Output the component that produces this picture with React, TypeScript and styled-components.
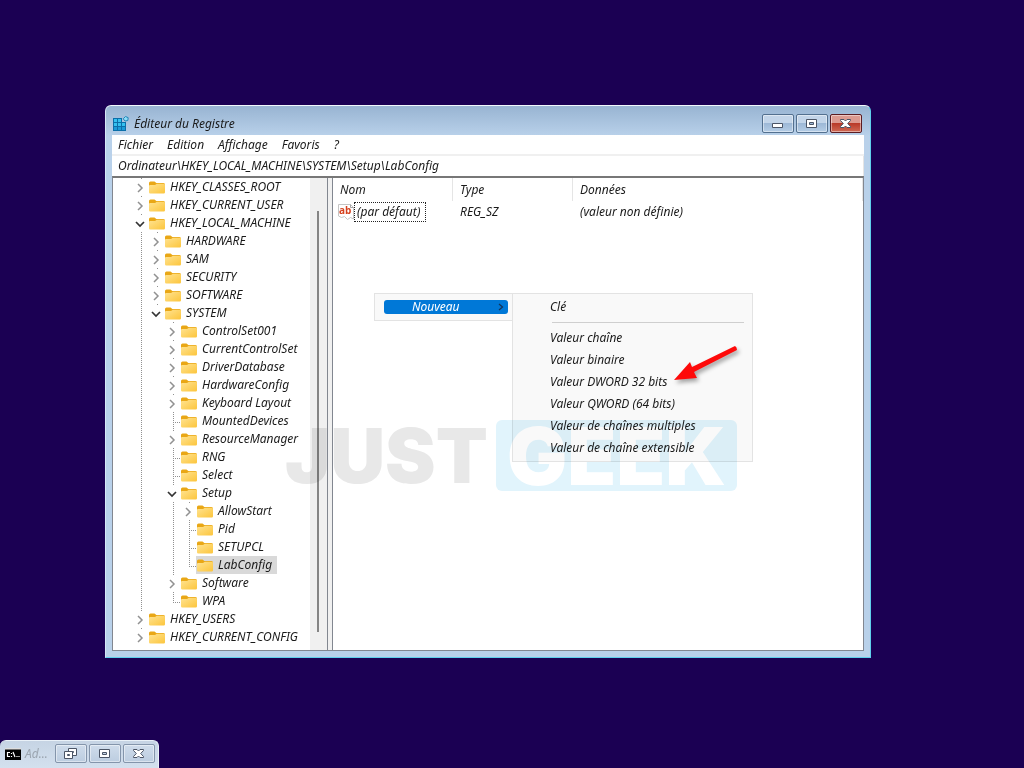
import React from "react";
import styled, { createGlobalStyle, css } from "styled-components";

const GlobalStyle = createGlobalStyle`
  *, *::before, *::after { box-sizing: border-box; }
  body {
    margin: 0;
    background: #1b0053;
    color: #1a1a1a;
    font: italic 12px/18px "Noto Sans", "Open Sans", sans-serif;
    overflow: hidden;
  }
  button, input { font: inherit; color: inherit; }
`;

const Desktop = styled.main`
  position: relative;
  min-height: 100vh;
`;

const Window = styled.section`
  position: absolute;
  top: 105px;
  left: 105px;
  right: 153px;
  padding: 0 6px 6px;
  border: 1px solid #5fd0ec;
  border-top-color: #f2f8fd;
  border-left-color: #d5e6f6;
  border-radius: 6px 6px 0 0;
  background: linear-gradient(#98b4d2, #b9d1ea 30px, #b9d1ea);
`;

const TitleBar = styled.header`
  display: flex;
  align-items: center;
  gap: 5px;
  height: 29px;
  padding: 6px 2px 0 1px;
`;

const Title = styled.h1`
  flex: 1;
  margin: 0;
  font: inherit;
`;

const ButtonGroup = styled.div`
  display: flex;
  gap: 2px;
`;

const frameTones = {
  active: css`
    border-color: #53708f;
    background: linear-gradient(#c3d5e9 45%, #9db8d6 50%, #b5cde6);
  `,
  close: css`
    border-color: #5b1c22;
    background: linear-gradient(#dc9a90 45%, #b93a29 50%, #cf6a55);
  `,
  inactive: css`
    border-color: #8495ab;
    background: linear-gradient(#cfdceb, #bccde0);
  `,
};

const FrameButton = styled.button<{ $tone: keyof typeof frameTones }>`
  display: grid;
  place-items: center;
  width: 32px;
  height: 19px;
  padding: 0;
  border: 1px solid;
  border-radius: 2px;
  box-shadow: inset 0 0 0 1px rgba(255, 255, 255, 0.45);
  ${(p) => frameTones[p.$tone]}
`;

const MenuBar = styled.nav`
  display: flex;
  gap: 14px;
  height: 21px;
  padding: 1px 6px;
  border-bottom: 2px solid #f0f0f0;
  background: #fff;
`;

const MenuBarButton = styled.button`
  padding: 0;
  border: 0;
  background: none;
`;

const AddressInput = styled.input`
  display: block;
  width: 100%;
  height: 20px;
  padding: 0 6px 2px;
  border: 0;
  border-right: 1px solid #e5e5e5;
  background: #fff;
  outline: none;
`;

const Panes = styled.div`
  display: flex;
  border: 1px solid #828790;
  border-top: 2px solid #777;
  background: #fff;
`;

const TreePane = styled.div`
  display: flex;
  flex: none;
  width: 215px;
  border-right: 1px solid #828790;
`;

const Tree = styled.ul`
  flex: 1;
  margin: 0;
  padding: 0 0 4px 19px;
  list-style: none;
`;

const TreeRow = styled.li`
  display: flex;
  height: 18px;
`;

const line = "repeating-linear-gradient(to bottom, #909090 0 1px, transparent 1px 2px)";
const dash = "repeating-linear-gradient(to right, #909090 0 1px, transparent 1px 2px)";

const guides = {
  none: css``,
  through: css`background: ${line} 9px 0 / 1px 18px no-repeat;`,
  tee: css`background: ${line} 9px 0 / 1px 18px no-repeat, ${dash} 9px 10px / 7px 1px no-repeat;`,
  corner: css`background: ${line} 9px 0 / 1px 11px no-repeat, ${dash} 9px 10px / 7px 1px no-repeat;`,
  tick: css`background: ${line} 9px 0 / 1px 2px no-repeat;`,
};

const Guide = styled.span<{ $kind: keyof typeof guides }>`
  flex: none;
  width: 16px;
  ${(p) => guides[p.$kind]}
`;

const Toggle = styled.button`
  display: grid;
  place-items: center;
  width: 16px;
  height: 18px;
  padding: 2px 0 0;
  border: 0;
  background: none;
`;

const TreeLabel = styled.span<{ $selected?: boolean }>`
  display: flex;
  align-items: center;
  gap: 5px;
  padding: 0 5px 0 1px;
  white-space: nowrap;
  background: ${(p) => (p.$selected ? "#d9d9d9" : "none")};
`;

const ScrollTrack = styled.div`
  display: flex;
  justify-content: center;
  width: 17px;
  padding: 33px 1px 18px 0;
  background: #f0f0f0;
`;

const ScrollThumb = styled.div`
  width: 2px;
  background: #858585;
`;

const Splitter = styled.div`
  flex: none;
  width: 5px;
  border-right: 1px solid #828790;
  background: #f0f0f0;
`;

const ValuesPane = styled.div`
  position: relative;
  flex: 1;
  min-width: 0;
`;

const ValuesTable = styled.table`
  width: 100%;
  table-layout: fixed;
  border-collapse: separate;
  border-spacing: 0;
`;

const HeadCell = styled.th<{ $width?: number }>`
  width: ${(p) => (p.$width ? `${p.$width}px` : "auto")};
  height: 23px;
  padding: 0 6px 0 7px;
  border-right: 1px solid #e5e5e5;
  font-weight: inherit;
  text-align: left;
`;

const Cell = styled.td`
  height: 22px;
  padding: 0 0 0 7px;
`;

const NameCell = styled(Cell)`
  padding-left: 5px;
`;

const ValueName = styled.span`
  display: flex;
  align-items: center;
`;

const Focused = styled.span`
  padding: 0 5px 0 2px;
  border: 1px dotted #222;
`;

const MenuLayer = styled.div`
  position: absolute;
  top: 115px;
  left: 41px;
  display: flex;
  align-items: flex-start;
`;

const MenuBox = styled.ul`
  margin: 0;
  padding: 6px 4px 6px 9px;
  border: 1px solid #e3e3e3;
  background: #f9f9f9;
  list-style: none;
`;

const SubMenuBox = styled(MenuBox)`
  width: 241px;
  margin-left: -1px;
  padding: 2px 8px 2px 0;
`;

const MenuItem = styled.button`
  display: block;
  width: 100%;
  height: 22px;
  padding: 0 0 0 37px;
  border: 0;
  background: none;
  text-align: left;
  white-space: nowrap;
`;

const ActiveItem = styled.button`
  display: flex;
  align-items: center;
  justify-content: space-between;
  width: 124px;
  height: 14px;
  padding: 0 4px 0 28px;
  border: 0;
  border-radius: 3px;
  background: #0078d7;
  color: #fff;
`;

const Separator = styled.li`
  height: 1px;
  margin: 4px 0 4px 39px;
  background: #cfcfcf;
`;

const Arrow = styled.svg`
  position: absolute;
  top: 48px;
  left: 294px;
  filter: drop-shadow(2px 3px 2px rgba(0, 0, 0, 0.35));
`;

const Watermark = styled.div`
  position: absolute;
  top: 420px;
  left: 285px;
  display: flex;
  align-items: center;
  gap: 8px;
  font: normal 900 76px/71px Inter, sans-serif;
  color: #e8e8e8;
  mix-blend-mode: multiply;
  pointer-events: none;
`;

const WatermarkBox = styled.span`
  padding: 0 11px;
  border-radius: 6px;
  background: #e1f4fc;
  color: #fff;
  font-size: 80px;
`;

const MinimizedWindow = styled.section`
  position: absolute;
  bottom: 0;
  left: 0;
  display: flex;
  align-items: center;
  gap: 4px;
  height: 28px;
  padding: 0 3px 2px 5px;
  border: 1px solid #e9f1f8;
  border-left: 0;
  border-bottom: 0;
  border-radius: 6px 6px 0 0;
  background: linear-gradient(#c6d4e4, #d3e0ee);
`;

const MinimizedTitle = styled.span`
  width: 26px;
  color: #9ba5b0;
`;

const FolderIcon = () => (
  <svg width="16" height="13" viewBox="0 0 16 13" aria-hidden="true">
    <defs>
      <linearGradient id="folder" x1="0" y1="0" x2="1" y2="1">
        <stop offset="0" stopColor="#ffe391" />
        <stop offset="1" stopColor="#fcc53c" />
      </linearGradient>
    </defs>
    <path d="M0 2Q0 .5 1.5 .5H5.5L7.3 2H14.5Q16 2 16 3.5V8H0Z" fill="#e9a716" />
    <path d="M0 5Q0 4 1 4H6L7.8 2.8H15Q16 2.8 16 4V11.2Q16 12.5 14.7 12.5H1.3Q0 12.5 0 11.2Z" fill="url(#folder)" />
  </svg>
);

const Chevron = ({ open }: { open?: boolean }) => (
  <svg width="10" height="10" viewBox="0 0 10 10" fill="none" aria-hidden="true">
    {open ? (
      <path d="M1 3L5 7L9 3" stroke="#333" strokeWidth="1.7" />
    ) : (
      <path d="M3 1L7 5L3 9" stroke="#919191" strokeWidth="1.5" />
    )}
  </svg>
);

const RegistryIcon = () => (
  <svg width="16" height="16" viewBox="0 0 16 16" aria-hidden="true">
    <path d="M0 2H9V6H13V15H0Z" fill="#0b6fa9" />
    <path d="M1 3H4V6H1ZM5 3H8V6H5ZM1 7H4V10H1ZM5 7H8V10H5ZM9 7H12V10H9Z" fill="#35c1ef" />
    <path d="M1 11H4V14H1ZM5 11H8V14H5ZM9 11H12V14H9Z" fill="#1b9bd8" />
    <path d="M12.5 .5L15.2 1.7L14.8 4.5L12 5L10.2 2.8Z" fill="#8ddcf7" stroke="#2286b8" strokeWidth="1" />
  </svg>
);

const StringIcon = () => (
  <svg width="16" height="16" viewBox="0 0 16 16" aria-hidden="true">
    <path d="M.5 .5H12.5L15.5 3.5V15L12.5 13.5L9.5 15.5L6.5 12.5L3.5 13.5L.5 12Z" fill="#fff" stroke="#c5c5c5" />
    <path d="M12.5 .5V3.5H15.5" fill="none" stroke="#a5a5a5" />
    <text x="1" y="10" fontFamily="Open Sans, sans-serif" fontStyle="normal" fontWeight="700" fontSize="10" fill="#d6411e">ab</text>
  </svg>
);

const ConsoleIcon = () => (
  <svg width="16" height="12" viewBox="0 0 16 12" aria-hidden="true">
    <path d="M0 0H16V12H0Z" fill="#000" />
    <path d="M0 0H16V1.5H0Z" fill="#dedede" />
    <path d="M5 4.5H2.5V8.5H5M6.5 5V6M6.5 8V9M8 4L10 9M12 8V9M14 8V9" stroke="#fff" strokeWidth="1.2" fill="none" />
  </svg>
);

const Glyph = ({ kind }: { kind: "minimize" | "maximize" | "restore" | "close" }) => (
  <svg width="14" height="12" viewBox="0 0 14 12" fill="none" aria-hidden="true">
    {kind === "minimize" && <path d="M1.5 5.5H11.5V9.5H1.5Z" fill="#fff" stroke="#4b5566" />}
    {kind === "maximize" && (
      <path d="M1.5 1.500H11.5V9.5H1.5ZM4.5 4.500V6.5H8.5V4.5Z" fill="#fff" fillRule="evenodd" stroke="#4b5566" />
    )}
    {kind === "restore" && (
      <g fill="#fff" fillRule="evenodd" stroke="#4b5566">
        <path d="M4.5 .5H12.5V7.5H4.5ZM7.500 3.5V4.5H9.5V3.5Z" />
        <path d="M.5 3.5H8.5V10.5H.5ZM3.5 6.5V7.5H5.5V6.5Z" />
      </g>
    )}
    {kind === "close" && (
      <path
        d="M1.500 1.500H5L6.500 3L8 1.500H11.500V2.500L8.700 5.500L11.500 8.500V9.500H8L6.500 8L5 9.500H1.500V8.500L4.300 5.500L1.500 2.500Z"
        fill="#fff"
        stroke="#4b5566"
      />
    )}
  </svg>
);

type Node = {
  name: string;
  level: number;
  state?: "open" | "closed";
  last?: boolean;
  selected?: boolean;
};

const nodes: Node[] = [
  { name: "HKEY_CLASSES_ROOT", level: 0, state: "closed" },
  { name: "HKEY_CURRENT_USER", level: 0, state: "closed" },
  { name: "HKEY_LOCAL_MACHINE", level: 0, state: "open" },
  { name: "HARDWARE", level: 1, state: "closed" },
  { name: "SAM", level: 1, state: "closed" },
  { name: "SECURITY", level: 1, state: "closed" },
  { name: "SOFTWARE", level: 1, state: "closed" },
  { name: "SYSTEM", level: 1, state: "open" },
  { name: "ControlSet001", level: 2, state: "closed" },
  { name: "CurrentControlSet", level: 2, state: "closed" },
  { name: "DriverDatabase", level: 2, state: "closed" },
  { name: "HardwareConfig", level: 2, state: "closed" },
  { name: "Keyboard Layout", level: 2, state: "closed" },
  { name: "MountedDevices", level: 2 },
  { name: "ResourceManager", level: 2, state: "closed" },
  { name: "RNG", level: 2 },
  { name: "Select", level: 2 },
  { name: "Setup", level: 2, state: "open" },
  { name: "AllowStart", level: 3, state: "closed" },
  { name: "Pid", level: 3 },
  { name: "SETUPCL", level: 3 },
  { name: "LabConfig", level: 3, last: true, selected: true },
  { name: "Software", level: 2, state: "closed" },
  { name: "WPA", level: 2, last: true },
  { name: "HKEY_USERS", level: 0, state: "closed" },
  { name: "HKEY_CURRENT_CONFIG", level: 0, state: "closed" },
];

const menus = ["Fichier", "Edition", "Affichage", "Favoris", "?"];

const newValues = [
  "Valeur chaîne",
  "Valeur binaire",
  "Valeur DWORD 32 bits",
  "Valeur QWORD (64 bits)",
  "Valeur de chaînes multiples",
  "Valeur de chaîne extensible",
];

const TreeNode = ({ node }: { node: Node }) => (
  <TreeRow role="treeitem" aria-level={node.level + 1} aria-selected={!!node.selected}>
    {Array.from({ length: node.level }, (_, depth) => (
      <Guide key={depth} $kind={depth === 1 ? "none" : "through"} />
    ))}
    {node.state ? (
      <Guide $kind="tick">
        <Toggle aria-label={node.name} aria-expanded={node.state === "open"}>
          <Chevron open={node.state === "open"} />
        </Toggle>
      </Guide>
    ) : (
      <Guide $kind={node.last ? "corner" : "tee"} />
    )}
    <TreeLabel $selected={node.selected}>
      <FolderIcon />
      {node.name}
    </TreeLabel>
  </TreeRow>
);

export default function App() {
  return (
    <Desktop>
      <GlobalStyle />
      <Window aria-label="Éditeur du Registre">
        <TitleBar>
          <RegistryIcon />
          <Title>Éditeur du Registre</Title>
          <ButtonGroup>
            <FrameButton $tone="active" aria-label="Réduire"><Glyph kind="minimize" /></FrameButton>
            <FrameButton $tone="active" aria-label="Agrandir"><Glyph kind="maximize" /></FrameButton>
            <FrameButton $tone="close" aria-label="Fermer"><Glyph kind="close" /></FrameButton>
          </ButtonGroup>
        </TitleBar>
        <MenuBar>
          {menus.map((name) => (
            <MenuBarButton key={name}>{name}</MenuBarButton>
          ))}
        </MenuBar>
        <AddressInput
          aria-label="Adresse"
          defaultValue="Ordinateur\HKEY_LOCAL_MACHINE\SYSTEM\Setup\LabConfig"
        />
        <Panes>
          <TreePane>
            <Tree role="tree">
              {nodes.map((node) => (
                <TreeNode key={node.name} node={node} />
              ))}
            </Tree>
            <ScrollTrack>
              <ScrollThumb />
            </ScrollTrack>
          </TreePane>
          <Splitter />
          <ValuesPane>
            <ValuesTable>
              <thead>
                <tr>
                  <HeadCell $width={120}>Nom</HeadCell>
                  <HeadCell $width={120}>Type</HeadCell>
                  <HeadCell>Données</HeadCell>
                </tr>
              </thead>
              <tbody>
                <tr>
                  <NameCell>
                    <ValueName>
                      <StringIcon />
                      <Focused>(par défaut)</Focused>
                    </ValueName>
                  </NameCell>
                  <Cell>REG_SZ</Cell>
                  <Cell>(valeur non définie)</Cell>
                </tr>
              </tbody>
            </ValuesTable>
            <MenuLayer>
              <MenuBox>
                <li>
                  <ActiveItem>
                    Nouveau
                    <svg width="6" height="8" viewBox="0 0 6 8" fill="none" aria-hidden="true">
                      <path d="M1 1L4.5 4L1 7" stroke="#12345a" strokeWidth="1.3" />
                    </svg>
                  </ActiveItem>
                </li>
              </MenuBox>
              <SubMenuBox>
                <li><MenuItem>Clé</MenuItem></li>
                <Separator role="separator" />
                {newValues.map((name) => (
                  <li key={name}><MenuItem>{name}</MenuItem></li>
                ))}
              </SubMenuBox>
              <Arrow width="74" height="44" viewBox="0 0 74 44" aria-hidden="true">
                <path d="M6 39L22 21L24 26L67 5Q69 6 69 9L26 31L29 37Z" fill="#fe0a0a" />
              </Arrow>
            </MenuLayer>
          </ValuesPane>
        </Panes>
      </Window>
      <Watermark aria-hidden="true">
        <span>JUST</span>
        <WatermarkBox>GEEK</WatermarkBox>
      </Watermark>
      <MinimizedWindow aria-label="Administrateur">
        <ConsoleIcon />
        <MinimizedTitle>Ad...</MinimizedTitle>
        <ButtonGroup>
          <FrameButton $tone="inactive" aria-label="Restaurer"><Glyph kind="restore" /></FrameButton>
          <FrameButton $tone="inactive" aria-label="Agrandir"><Glyph kind="maximize" /></FrameButton>
          <FrameButton $tone="inactive" aria-label="Fermer"><Glyph kind="close" /></FrameButton>
        </ButtonGroup>
      </MinimizedWindow>
    </Desktop>
  );
}
